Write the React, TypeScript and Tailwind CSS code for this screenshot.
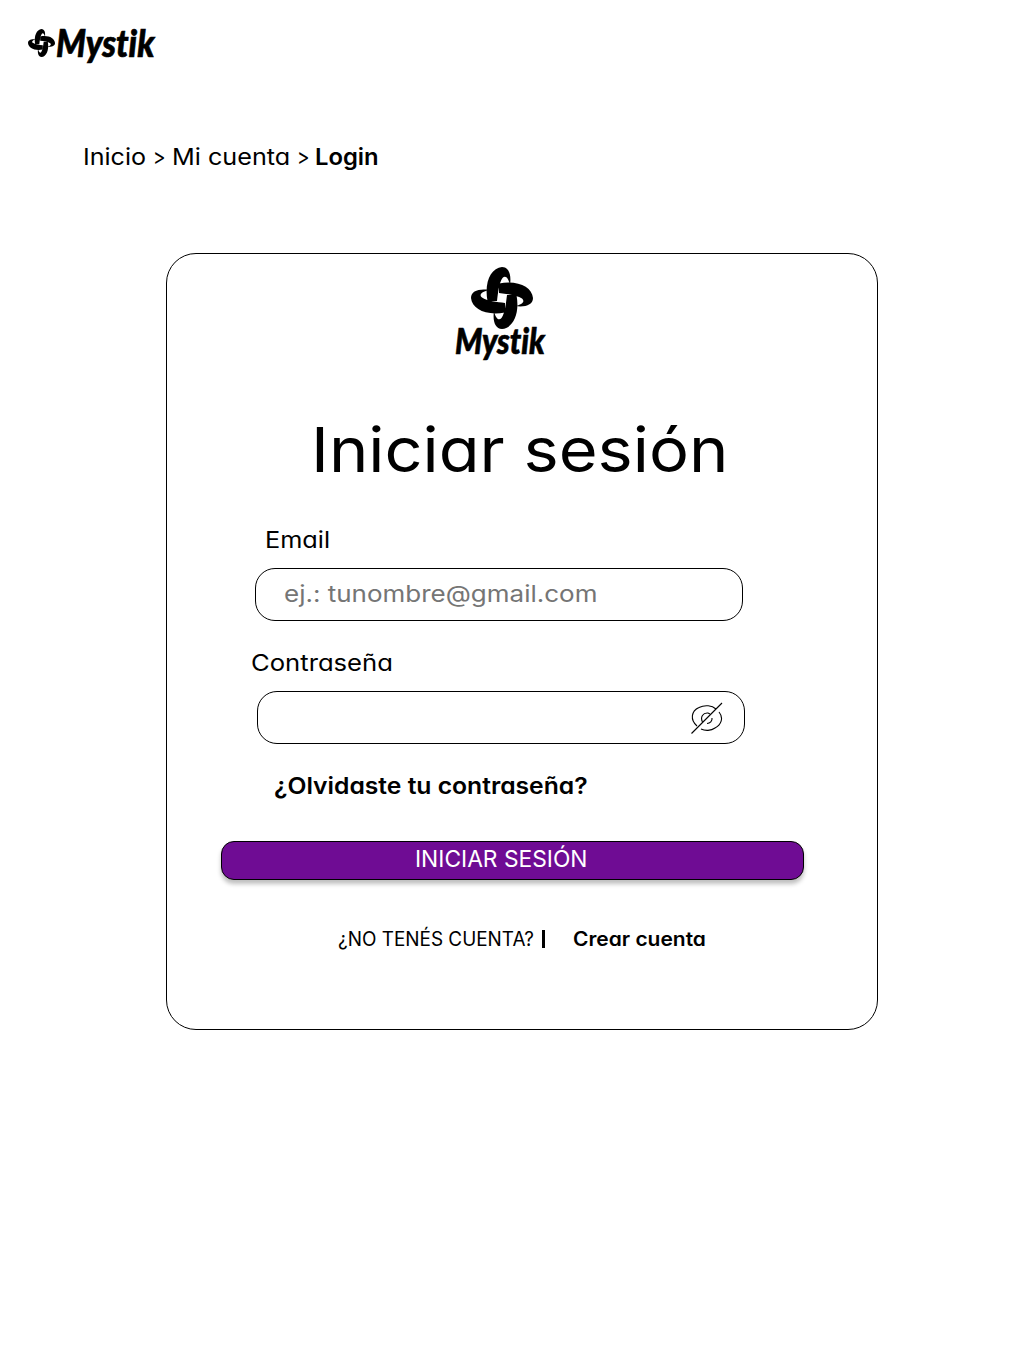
import React from "react";

const wordFont = {
  fontFamily: "Lato, sans-serif",
  fontWeight: 900,
  fontStyle: "italic",
  fontVariantLigatures: "none",
} as const;

const LOBE = "M16.500 34 C13 15 20 1 31 0 C38 0 40.500 8 39 18 C37.500 11 34.500 7.500 31.500 11 C28 16 27 26 26 34 Z";

function Mark({ className }: { className: string }) {
  return (
    <svg viewBox="0 0 62 62" preserveAspectRatio="none" className={className}>
      {[0, 90, 180, 270].map((a) => (
        <path key={a} d={LOBE} transform={`rotate(${a} 31 31)`} />
      ))}
    </svg>
  );
}

function Word({ className }: { className: string }) {
  return (
    <svg viewBox="0 0 104 54" preserveAspectRatio="none" className={className}>
      <text x="1" y="41.5" fontSize="38.5" textLength="98.5" lengthAdjust="spacingAndGlyphs" stroke="black" strokeWidth="0.7" style={wordFont}>
        Mystik
      </text>
    </svg>
  );
}

function EyeOff() {
  return (
    <svg viewBox="0 0 32 32" className="h-8 w-8" fill="none" stroke="black" strokeWidth="1.1">
      <path d="M0.500 31.500 L31 1" />
      <path d="M6 24 C-1 18 0 9 8 5.500 C14 2.500 21 3.500 25 7" />
      <path d="M28 10 C33 16 30 23 24 26 C20 29 14 29 10 27" />
      <path d="M11.500 20 C9 15 12 10.500 17 11 L19 12" />
      <path d="M21 16 C21.500 19 19 21.500 16 21.500" />
    </svg>
  );
}

export default function App() {
  return (
    <div className="flex h-[1366px] w-[1024px] flex-col overflow-hidden bg-white font-[Inter,sans-serif] text-[23px] leading-[36px] text-black [font-feature-settings:'cv11']">
      <header className="flex h-[139px] items-start pt-[15px] pl-7">
        <Mark className="mt-[14px] h-[28px] w-[27px]" />
        <Word className="h-[54px] w-[104px] overflow-visible" />
      </header>
      <nav className="flex h-[114px] items-start pl-[83px] whitespace-nowrap">
        <span className="w-[70px] origin-left scale-x-[1.09]">Inicio</span>
        <span className="w-[19px] origin-left scale-x-[0.82]">&gt;</span>
        <span className="w-[125px] origin-left scale-x-[1.095]">Mi cuenta</span>
        <span className="w-[18px] origin-left scale-x-[0.82]">&gt;</span>
        <b className="origin-left scale-x-[1.035] font-semibold">Login</b>
      </nav>
      <main className="ml-[166px] flex h-[777px] w-[712px] flex-col items-start rounded-[30px] border border-black pt-[13px]">
        <div className="ml-[287px] flex h-[96px] w-[95px] flex-col items-center">
          <Mark className="h-[62px] w-[62px] shrink-0" />
          <Word className="-mt-[13px] h-[50px] w-[95px] shrink-0 overflow-visible" />
        </div>
        <h1 className="mt-[39px] ml-[144px] h-[96px] origin-left scale-x-[1.076] text-[62px] leading-[96px] font-[390] whitespace-nowrap">
          Iniciar sesión
        </h1>
        <label className="mt-[24px] ml-[98px] h-[36px] origin-left scale-x-[1.1]">Email</label>
        <div className="mt-[10px] ml-[88px] flex h-[53px] w-[488px] items-center rounded-[20px] border border-black pb-[2px] pl-7 text-[#757575]">
          <span className="origin-left scale-x-[1.13] font-[380] [font-feature-settings:normal]">ej.: tunombre@gmail.com</span>
        </div>
        <label className="mt-[24px] ml-[84px] h-[36px] origin-left scale-x-[1.115]">Contraseña</label>
        <div className="mt-[10px] ml-[90px] flex h-[53px] w-[488px] items-center justify-end rounded-[20px] border border-black pr-[21px]">
          <EyeOff />
        </div>
        <a className="mt-[24px] ml-[107px] h-[36px] origin-left scale-x-[1.073] font-semibold">¿Olvidaste tu contraseña?</a>
        <button className="mt-[37px] ml-[54px] flex h-[39px] w-[583px] items-start rounded-[13px] border border-black bg-[#6f0c94] pl-[193px] leading-[35px] text-white shadow-[0_4px_4px_rgba(0,0,0,0.25)]">
          <span className="origin-left scale-x-[0.99]">INICIAR SESIÓN</span>
        </button>
        <div className="mt-[44px] ml-[171px] flex h-[30px] items-center text-[19.5px] whitespace-nowrap">
          <span className="w-[204px] origin-left scale-x-[0.97]">¿NO TENÉS CUENTA?</span>
          <span className="h-[18px] w-[3px] bg-black" />
          <b className="ml-[28px] origin-left scale-x-[1.075] font-semibold">Crear cuenta</b>
        </div>
      </main>
    </div>
  );
}
